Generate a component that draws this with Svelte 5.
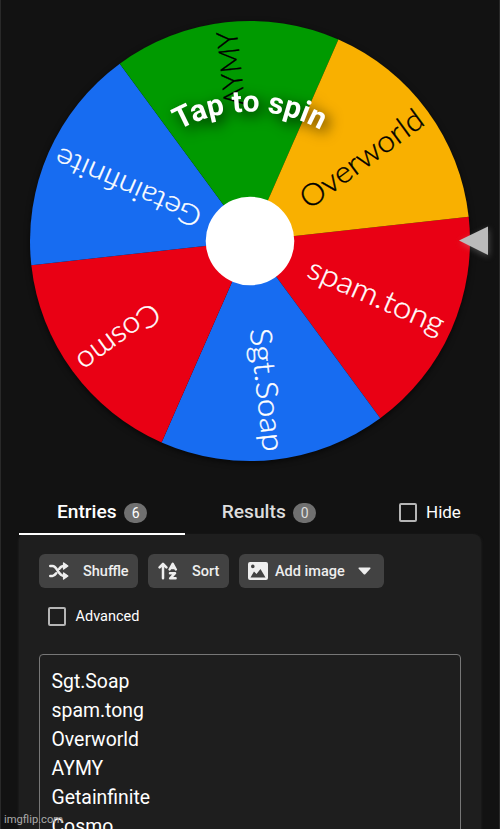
<script>
  const labels = [
    { name: 'spam.tong', color: '#e90014', ink: '#fff', start: 65, length: 146, size: 30 },
    { name: 'Sgt.Soap', color: '#176cf1', ink: '#fff', start: 88, length: 123.5, size: 30 },
    { name: 'Cosmo', color: '#e90014', ink: '#fff', start: 115.5, length: 95, size: 30 },
    { name: 'Getainfinite', color: '#176cf1', ink: '#fff', start: 54.5, length: 157, size: 28.5 },
    { name: 'AYMY', color: '#009a00', ink: '#000', start: 136, length: 75, size: 29 },
    { name: 'Overworld', color: '#f9b000', ink: '#000', start: 66, length: 145.5, size: 30 }
  ];
  const point = (deg) => {
    const a = (deg * Math.PI) / 180;
    return `${250 + 220 * Math.cos(a)} ${241 + 220 * Math.sin(a)}`;
  };
  const slices = labels.map((l, i) => ({
    ...l,
    mid: 23.7 + i * 60,
    d: `M250 241L${point(-6.3 + i * 60)}A220 220 0 0 1 ${point(53.7 + i * 60)}Z`
  }));
  const entries = ['Sgt.Soap', 'spam.tong', 'Overworld', 'AYMY', 'Getainfinite', 'Cosmo'];
</script>

<main>
  <svg class="wheel" width="500" height="480" viewBox="0 0 500 480">
    <defs><path id="arc" d="M105.5 256A144.5 144.5 0 0 1 394.5 256" /></defs>
    <circle class="rim" cx="250" cy="241" r="219.5" />
    {#each slices as s}
      <path d={s.d} fill={s.color} />
    {/each}
    {#each slices as s}
      <text
        class="name"
        transform="translate(250 241) rotate({s.mid})"
        x={s.start}
        y="10"
        fill={s.ink}
        stroke={s.ink}
        font-size={s.size}
        textLength={s.length}
        lengthAdjust="spacingAndGlyphs">{s.name}</text>
    {/each}
    <circle cx="250" cy="241" r="44.3" fill="#fff" />
    <g class="glow"><text class="tap" text-anchor="middle"><textPath href="#arc" startOffset="50%">Tap to spin</textPath></text></g>
    <path class="pointer" d="M459 240.5L488 226.5V255Z" />
  </svg>

  <nav>
    <div class="tab active">Entries <span class="badge">6</span></div>
    <div class="tab results">Results <span class="badge">0</span></div>
    <div class="check hide"><i></i>Hide</div>
  </nav>

  <section>
    <div class="buttons">
      <button class="shuffle">
        <svg width="20" height="18" viewBox="0 0 20 18"><path d="M1.3 4H3.5C8.5 4 9 14 15 14H17M1.3 14H3.5C5 14 6 13 7.2 11.3M10.3 6.7C11.5 5 12.5 4 15 4H17" fill="none" stroke="currentColor" stroke-width="2.6" stroke-linecap="round" /><path d="M14.6 1L18.8 4L14.6 7ZM14.6 11L18.8 14L14.6 17Z" fill="currentColor" stroke="currentColor" stroke-width="1.4" stroke-linejoin="round" /></svg>
        Shuffle
      </button>
      <button class="sort">
        <svg width="20" height="18" viewBox="0 0 20 18"><path d="M5 16.2V2M1.6 5.4L5 1.8L8.4 5.4M11.6 7.5L14.7 1.8L17.8 7.5M12.8 6H16.6M12 11.2H17L12.2 16.3H17.6" fill="none" stroke="currentColor" stroke-width="2.5" stroke-linecap="round" stroke-linejoin="round" /></svg>
        Sort
      </button>
      <button class="image">
        <svg width="20" height="18" viewBox="0 0 20 18"><path fill="currentColor" fill-rule="evenodd" d="M2 0H18Q20 0 20 2V16Q20 18 18 18H2Q0 18 0 16V2Q0 0 2 0ZM2.5 15.5H17.5L12.5 7L8.5 12L6 9.5ZM4.8 2.6A1.8 1.8 0 1 0 4.8 6.2A1.8 1.8 0 1 0 4.8 2.6Z" /></svg>
        Add image
        <svg class="caret" width="13" height="8" viewBox="0 0 13 8"><path d="M1 .5H12Q13 1 12.3 1.8L7.5 7Q6.5 8 5.5 7L.7 1.8Q0 1 1 .5Z" fill="currentColor" /></svg>
      </button>
    </div>
    <div class="check advanced"><i></i>Advanced</div>
    <div class="list">
      {#each entries as e}<div>{e}</div>{/each}
    </div>
  </section>
  <small>imgflip.com</small>
</main>

<style>
  :global(body) { margin: 0; background: #121212; }
  main {
    position: relative;
    box-sizing: border-box;
    width: 500px;
    height: 829px;
    overflow: hidden;
    background: #121212;
    box-shadow: inset 1px 0 #292929, inset -1px 0 #292929;
    font-family: Roboto, sans-serif;
    color: #fff;
  }
  .wheel { display: block; }
  .rim { filter: drop-shadow(0 2px 3px rgba(0, 0, 0, 0.7)); }
  .name { font-family: Lato, sans-serif; font-weight: 300; stroke-width: 0.35px; }
  .tap { font-size: 30px; font-weight: 700; fill: #fff; }
  .glow { filter: drop-shadow(4px 4px 7px rgba(0, 0, 0, 0.8)); }
  .pointer { fill: #bbb; filter: drop-shadow(1px 2px 3px rgba(180, 180, 180, 0.35)); }
  nav {
    display: flex;
    box-sizing: border-box;
    height: 54px;
    padding: 10px 19px 0;
  }
  .tab {
    display: flex;
    flex: none;
    box-sizing: border-box;
    align-items: center;
    justify-content: center;
    gap: 7.5px;
    width: 166px;
    height: 45px;
    font-size: 19.2px;
    font-weight: 500;
    border-bottom: 2px solid transparent;
  }
  .active { border-color: #fff; }
  .results { color: #ddd; width: 168px; }
  .badge {
    width: 23px;
    height: 20px;
    margin-top: 2px;
    border-radius: 10px;
    background: #707070;
    font-size: 14px;
    font-weight: 400;
    line-height: 20px;
    text-align: center;
  }
  .check { display: flex; align-items: center; color: #fff; }
  .check i { box-sizing: border-box; width: 18px; height: 19px; border: 2px solid #b5b5b5; border-radius: 2px; }
  .hide { height: 44px; margin-left: 46px; gap: 9px; font-size: 17px; }
  section {
    box-sizing: border-box;
    width: 462px;
    height: 310px;
    margin-left: 19px;
    padding: 20px;
    border-radius: 6px 8px 0 0;
    background: #1e1e1e;
    box-shadow: 0 1px 3px #262626;
  }
  .buttons { display: flex; gap: 10px; }
  button {
    display: flex;
    align-items: center;
    box-sizing: border-box;
    height: 34px;
    padding: 0 0 0 10px;
    border: 0;
    border-radius: 6px;
    background: #424242;
    color: #eee;
    font: 500 14.5px Roboto, sans-serif;
    white-space: nowrap;
  }
  .shuffle { width: 99px; gap: 14px; }
  .sort { width: 81px; gap: 14px; }
  .image { width: 145px; padding-left: 9px; gap: 7px; }
  .caret { margin-left: 6px; }
  .advanced { height: 19px; margin: 19px 0 0 9px; gap: 9.5px; font-size: 14.5px; }
  .list {
    box-sizing: border-box;
    width: 422px;
    height: 240px;
    margin-top: 28px;
    padding: 12px 11.5px;
    border: 1px solid #777;
    border-radius: 4px;
    font-size: 19.4px;
    line-height: 29.1px;
  }
  small {
    position: absolute;
    left: 4px;
    bottom: 2px;
    font-size: 11.2px;
    line-height: 14px;
    color: #aaa;
  }
</style>
